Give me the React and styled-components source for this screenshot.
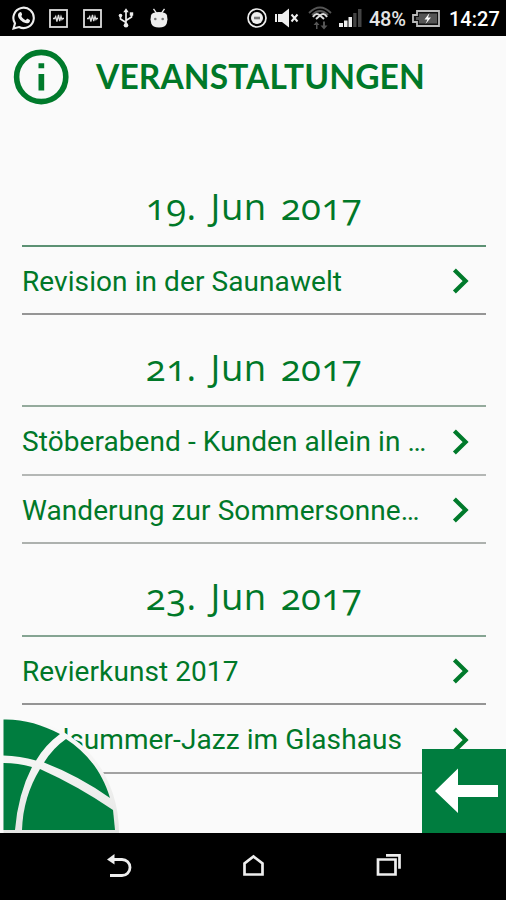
import React from 'react';
import styled, { createGlobalStyle } from 'styled-components';

const GlobalStyle = createGlobalStyle`
  body {
    margin: 0;
    background: #fafafa;
  }
`

const Screen = styled.div`
  position: relative;
  display: flex;
  flex-direction: column;
  width: 506px;
  height: 900px;
  overflow: hidden;
  background: #fafafa;
  color: #007828;
  font-family: Roboto, sans-serif;
`

const StatusBar = styled.div`
  flex: none;
  display: flex;
  justify-content: space-between;
  align-items: center;
  box-sizing: border-box;
  height: 36px;
  padding: 0 7px 0 12px;
  background: #000;
  color: #fff;
`

const StatusGroup = styled.div`
  display: flex;
  align-items: center;
  height: 36px;

  svg {
    display: block;
    flex: none;
  }
`

const Percent = styled.span`
  width: 38px;
  margin: 2px 5px 0 7px;
  font-size: 20px;
  font-weight: 500;
  letter-spacing: -0.3px;
  white-space: nowrap;
  color: #e4e4e4;
`

const Clock = styled.span`
  width: 50px;
  margin: 2px 0 0 9px;
  font-size: 20px;
  font-weight: 500;
  white-space: nowrap;
`

const Header = styled.header`
  flex: none;
  display: flex;
  align-items: center;
  height: 82px;
  padding-left: 13px;

  svg {
    display: block;
  }
`

const Title = styled.h1`
  margin: 0 0 2px 27px;
  font-family: Lato, sans-serif;
  font-size: 33.5px;
  line-height: 40px;
  font-weight: 700;
  letter-spacing: 0.12px;
  white-space: nowrap;
`

const Events = styled.main`
  flex: 1;
  min-height: 0;
  overflow: hidden;
  padding: 36px 20px 0 22px;
`

const DateTitle = styled.h2`
  box-sizing: border-box;
  height: ${props => props.$height}px;
  margin: 0;
  padding-top: 30px;
  border-bottom: 2px solid ${props => props.$line};
  font-family: 'Open Sans', sans-serif;
  font-size: 36.5px;
  line-height: 44px;
  font-weight: 500;
  font-variant-numeric: oldstyle-nums;
  letter-spacing: 0.5px;
  word-spacing: 4px;
  text-align: center;
`

const Row = styled.div`
  display: flex;
  align-items: center;
  box-sizing: border-box;
  height: ${props => props.$height}px;
  padding-right: 16px;
  border-bottom: 2px solid ${props => props.$line};

  svg {
    flex: none;
    margin-top: 2px;
  }
`

const Name = styled.span`
  flex: 1;
  padding-top: 3px;
  font-size: 28px;
  line-height: 36px;
  letter-spacing: 0.08px;
  white-space: nowrap;
`

const GlobeLogo = styled.svg`
  position: absolute;
  left: 0;
  top: 714px;
`

const BackButton = styled.button`
  position: absolute;
  left: 422px;
  top: 749px;
  display: block;
  width: 84px;
  height: 84px;
  padding: 0;
  border: 0;
  background: #007d3f;
`

const NavBar = styled.nav`
  flex: none;
  display: flex;
  justify-content: space-between;
  box-sizing: border-box;
  height: 67px;
  padding: 21px 104px 0 106px;
  background: #000;
`

const groups = [
  {
    date: '19. Jun 2017',
    height: 93,
    line: '#5c9173',
    events: [
      { name: 'Revision in der Saunawelt', height: 68, line: '#959595' },
    ],
  },
  {
    date: '21. Jun 2017',
    height: 92,
    line: '#94aa9c',
    events: [
      { name: 'Stöberabend - Kunden allein in …', height: 69, line: '#b4b7b5' },
      { name: 'Wanderung zur Sommersonne…', height: 68, line: '#adb1ae' },
    ],
  },
  {
    date: '23. Jun 2017',
    height: 93,
    line: '#85a492',
    events: [
      { name: 'Revierkunst 2017', height: 68, line: '#949494' },
      { name: 'Midsummer-Jazz im Glashaus', height: 69, line: '#a2a2a2' },
    ],
  },
];

const WhatsAppIcon = () => (
  <svg width="24" height="24" viewBox="0 0 24 24" fill="none">
    <path d="M1.5 22.5 3 17.4A10.2 10.2 0 1 1 7 21z" stroke="#eee" strokeWidth="2.1" />
    <path d="M7.5 6.5c1-1 1.8-.5 2.2.7.5 1.2.7 1.5-.4 2.8 1 2.1 2.4 3.4 4.6 4.2 1.2-1.6 1.4-1.6 2.6-.9 1.6.8 1.9 1 1.2 2.4-1 1.8-3.3 2-5.7.9-3-1.4-6.7-5.1-5.9-8.3.2-.8.7-1.2 1.4-1.8z" fill="#eee" />
  </svg>
)

const WaveBoxIcon = () => (
  <svg width="19" height="19" viewBox="0 0 19 19" fill="none" stroke="#ddd">
    <rect x="1" y="1" width="17" height="17" strokeWidth="1.8" />
    <path d="M4 9.5h1.5l1.2-2 1.2 5L9.5 6l1.2 6 1.3-4.5 1 3 .7-1H15" strokeWidth="1.3" />
  </svg>
)

const UsbIcon = () => (
  <svg width="16" height="20" viewBox="0 0 16 20" fill="none" stroke="#eee" strokeWidth="1.7">
    <path d="M8 16V3M8 14.5 2.5 11V8M8 12.5 13.5 9V6" />
    <path d="m5.3 4.2 2.7-4 2.7 4z" fill="#eee" stroke="none" />
    <circle cx="8" cy="17.3" r="2.3" fill="#eee" stroke="none" />
    <circle cx="2.5" cy="7.5" r="1.8" fill="#eee" stroke="none" />
    <path d="M11.8 4.3h3.4v3.4h-3.4z" fill="#eee" stroke="none" />
  </svg>
)

const AndroidIcon = () => (
  <svg width="18" height="20" viewBox="0 0 18 20">
    <path d="m3.5.8 3 4.4M14.5.8l-3 4.4" stroke="#eee" strokeWidth="1.3" />
    <path d="M1 7.5Q1.5 4 9 4t8 3.5l.5 4-.8 4Q15.5 19.5 9 19.5T1.3 15.5l-.8-4z" fill="#eee" />
    <circle cx="5.3" cy="11" r="1.3" fill="#777" />
    <circle cx="12.7" cy="11" r="1.3" fill="#777" />
  </svg>
)

const DndIcon = () => (
  <svg width="20" height="20" viewBox="0 0 20 20" fill="none">
    <circle cx="10" cy="10" r="9" stroke="#eee" strokeWidth="1.7" />
    <circle cx="10" cy="10" r="6" fill="#eee" />
    <path d="M7 10h6" stroke="#777" strokeWidth="2.6" />
  </svg>
)

const MuteIcon = () => (
  <svg width="24" height="20" viewBox="0 0 24 20">
    <path d="M0 6h2v8H0zM3 6h4l7-5.5v19L7 14H3z" fill="#eee" />
    <path d="m16.5 6.500 6 7m0-7-6 7" stroke="#eee" strokeWidth="2" />
  </svg>
)

const WifiIcon = () => (
  <svg width="24" height="26" viewBox="0 0 24 26" fill="none">
    <path d="M1 8Q12-3 23 8M4 10Q12 2 20 10" stroke="#555" strokeWidth="1.8" />
    <path d="M5 12q3-5 7-1.5Q16 7 19 12M8 14l4-3.5 4 3.5" stroke="#ddd" strokeWidth="2" />
    <path d="M8 24v-4H5.5L8.5 16.5l3 3.5H9.5v4zM15 16.5v4h-2.5l3.5 4 3.5-4H17v-4z" fill="#555" />
  </svg>
)

const SignalIcon = () => (
  <svg width="23" height="18" viewBox="0 0 23 18">
    <path d="M0 14h4v4H0zM5 11.5h3.5V18H5zM9.5 8H13v10H9.500z" fill="#eee" />
    <path d="M14.2 4H17.5v14h-3.3zM19 0h3.5v18H19z" fill="#444" />
  </svg>
)

const BatteryIcon = () => (
  <svg width="28" height="17" viewBox="0 0 28 17">
    <path d="M5 1h22v15H5v-4H1V5h4z" fill="#111" stroke="#bbb" strokeWidth="1.8" />
    <path d="M7 3.5h18v10H7V10H4V7h3z" fill="#555" />
    <path d="m17.5 3-5 6.5h3L13.5 14l5.5-6.5h-3z" fill="#fff" />
  </svg>
)

const InfoIcon = () => (
  <svg width="56" height="56" viewBox="0 0 56 56" fill="none">
    <circle cx="28.2" cy="28" r="24.6" stroke="#007a2b" strokeWidth="5.6" />
    <path d="M25.5 14.3h5.700v5h-5.700zM25.5 25h5.700v16.5h-5.700z" fill="#007a2b" />
  </svg>
)

const Chevron = () => (
  <svg width="18" height="28" viewBox="0 0 18 28" fill="none">
    <path d="m2.4 3 11.2 11-11.2 11" stroke="#007a2b" strokeWidth="4.2" />
  </svg>
)

class EventGroup extends React.Component {

  renderEvent = (event) => (
    <Row key={event.name} $height={event.height} $line={event.line}>
      <Name>{event.name}</Name>
      <Chevron />
    </Row>
  )

  render() {
    const { group } = this.props;

    return (
      <section>
        <DateTitle $height={group.height} $line={group.line}>{group.date}</DateTitle>
        {group.events.map(this.renderEvent)}
      </section>
    )
  }
}

const Gap = styled.span`
  width: ${props => props.$size}px;
`

const App = () => (
  <Screen>
    <GlobalStyle />
    <StatusBar>
      <StatusGroup>
        <WhatsAppIcon />
        <Gap $size={13} />
        <WaveBoxIcon />
        <Gap $size={15} />
        <WaveBoxIcon />
        <Gap $size={16} />
        <UsbIcon />
        <Gap $size={16} />
        <AndroidIcon />
      </StatusGroup>
      <StatusGroup>
        <DndIcon />
        <Gap $size={8} />
        <MuteIcon />
        <Gap $size={9} />
        <WifiIcon />
        <Gap $size={7} />
        <SignalIcon />
        <Percent>48%</Percent>
        <BatteryIcon />
        <Clock>14:27</Clock>
      </StatusGroup>
    </StatusBar>
    <Header>
      <InfoIcon />
      <Title>VERANSTALTUNGEN</Title>
    </Header>
    <Events>
      {groups.map(group => <EventGroup key={group.date} group={group} />)}
    </Events>
    <GlobeLogo width="122" height="119" viewBox="0 0 122 119" fill="none">
      <defs>
        <linearGradient id="rim" x1="0" y1="0" x2="0" y2="1">
          <stop offset="0" stopColor="#fafafa" />
          <stop offset="0.4" stopColor="#f4f4f3" />
          <stop offset="1" stopColor="#e4e5e4" />
        </linearGradient>
      </defs>
      <path d="M3.5 4C64 0 119 48 119 119H3.5z" fill="url(#rim)" />
      <path d="M3.5 5.5C23 5 42 10.5 60 20Q45 31 36 46.5Q20 42 3.5 41.5z" fill="#007d3f" />
      <path d="M66 25C86 38 102 57 110 84Q79 62 44 48.5Q53 34 66 25z" fill="#007d3f" />
      <path d="M3.5 49Q18 49 32 53Q18 80 15 116H3.5z" fill="#007d3f" />
      <path d="M40 55Q78 72 113 96L115 116H22Q23 83 40 55z" fill="#007d3f" />
    </GlobeLogo>
    <BackButton>
      <svg width="84" height="84" viewBox="0 0 84 84">
        <path d="M13 42 36 19.5V36h40v12H36v16z" fill="#fff" />
      </svg>
    </BackButton>
    <NavBar>
      <svg width="26" height="26" viewBox="0 0 26 26" fill="none">
        <path d="M6 5.5h10a8 8 0 0 1 0 16H4" stroke="#eee" strokeWidth="2.8" />
        <path d="M1 5.5 8.5 0v10.5z" fill="#eee" />
      </svg>
      <svg width="26" height="26" viewBox="0 0 26 26" fill="none" stroke="#eee" strokeWidth="2.7">
        <path d="M3.5 20.5V9.5L12.5 2.5l9 7v11z" />
      </svg>
      <svg width="26" height="26" viewBox="0 0 26 26" fill="none" stroke="#eee" strokeWidth="2.7">
        <path d="M2 5.500h17.5v15H2zM10 1.300h13.500v13.500" />
      </svg>
    </NavBar>
  </Screen>
)

export default App;
